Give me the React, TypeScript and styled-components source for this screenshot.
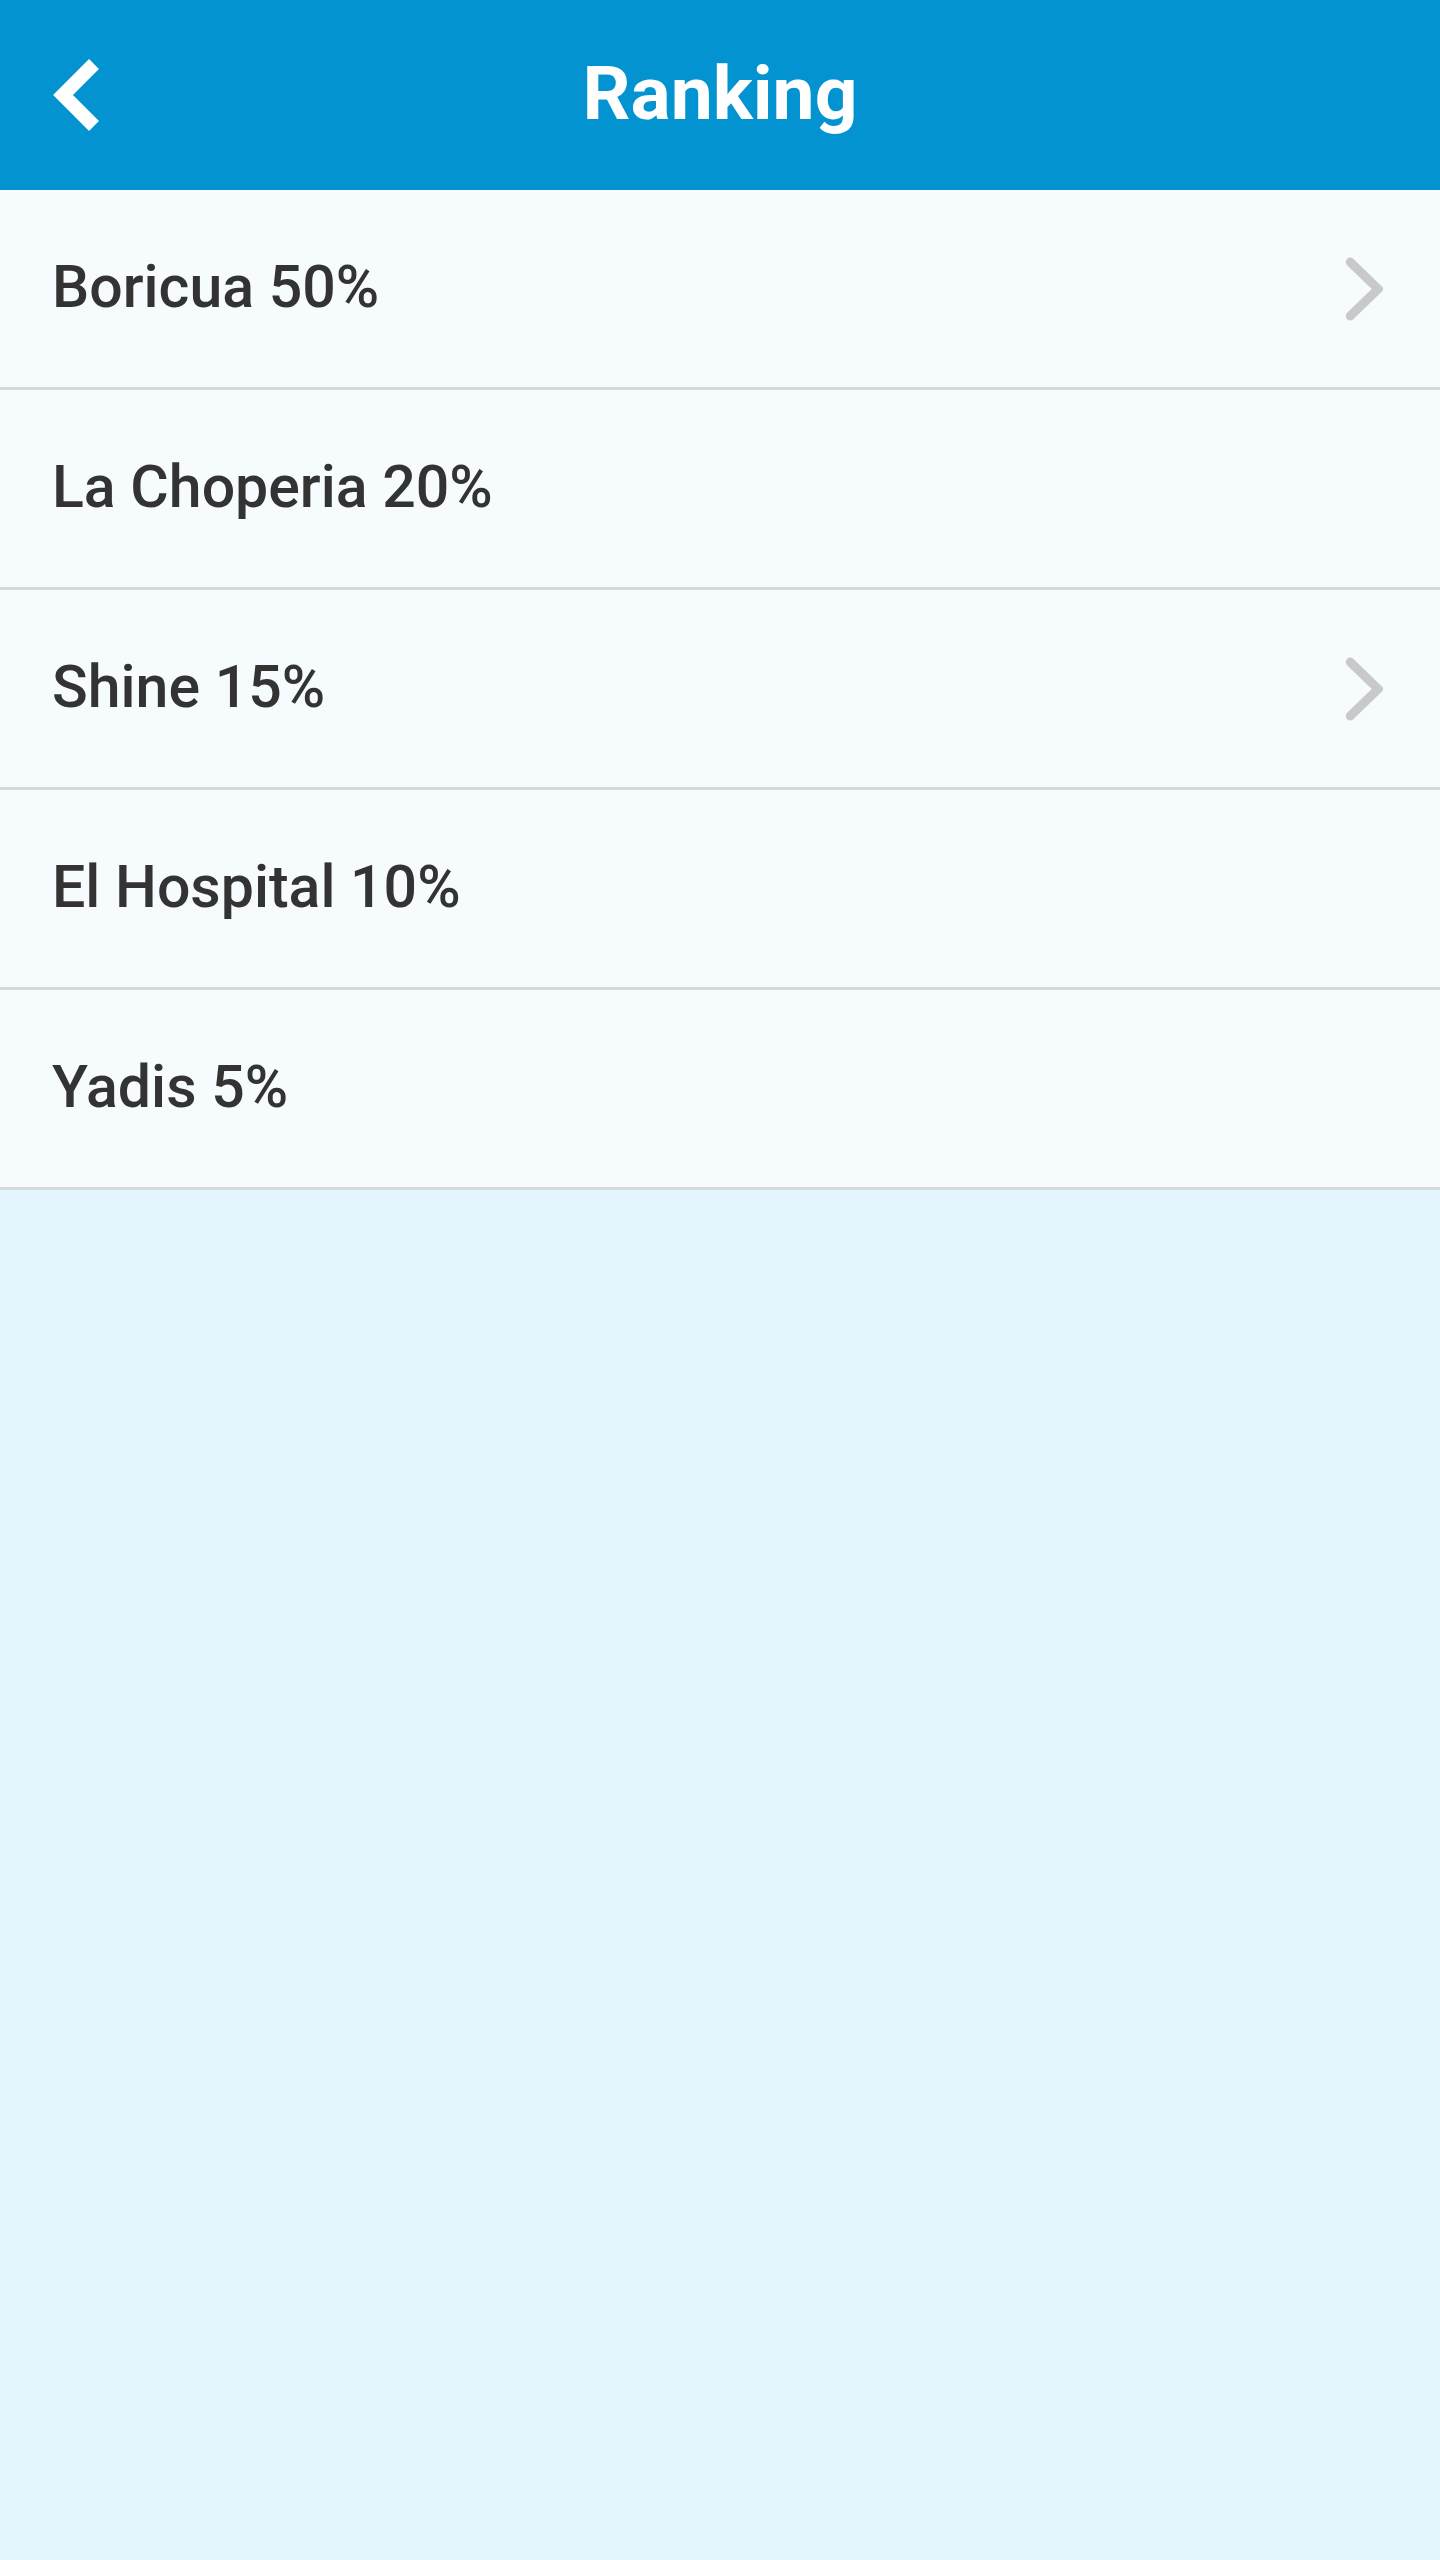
import React from "react";
import styled, { createGlobalStyle } from "styled-components";

const GlobalStyle = createGlobalStyle`
  html, body {
    margin: 0;
    padding: 0;
    background: #e3f5fd;
  }
  body {
    font-family: Roboto, "Noto Sans", "Liberation Sans", sans-serif;
  }
`;

const Screen = styled.div`
  min-height: 100vh;
  display: flex;
  flex-direction: column;
  background: #e3f5fd;
`;

const Header = styled.header`
  height: 190px;
  background: #0393d0;
  display: grid;
  grid-template-columns: 190px 1fr 190px;
  align-items: center;
`;

const BackButton = styled.button`
  background: none;
  border: 0;
  padding: 0 0 0 50px;
  height: 100%;
  display: flex;
  align-items: center;
  cursor: pointer;
`;

const Title = styled.h1`
  margin: 0;
  text-align: center;
  color: #ffffff;
  font-family: Roboto, "Noto Sans", sans-serif;
  font-weight: 700;
  font-size: 75px;
  line-height: 1;
  padding-bottom: 4px;
`;

const List = styled.ul`
  list-style: none;
  margin: 0;
  padding: 0;
`;

const Row = styled.li`
  height: 197px;
  box-sizing: content-box;
  border-bottom: 3px solid #d5d9da;
  background: #f6fbfe;
  display: flex;
  align-items: center;
  justify-content: space-between;
  padding: 0 57px 0 52px;
`;

const Label = styled.span`
  font-family: Roboto, "Noto Sans", sans-serif;
  font-size: 59px;
  font-weight: 500;
  color: #333333;
  padding-bottom: 4px;
`;

const Chevron = ({ color, size }: { color: string; size: number }) => (
  <svg width={size * 0.6} height={size} viewBox="0 0 38 64" fill="none">
    <path
      d="M5 5 L33 32 L5 59"
      stroke={color}
      strokeWidth={9}
      strokeLinecap="round"
      strokeLinejoin="miter"
    />
  </svg>
);

const BackChevron = () => (
  <svg width="60" height="92" viewBox="0 0 60 92" fill="none">
    <path
      d="M44 15 L13 46 L44 77"
      stroke="#ffffff"
      strokeWidth={14}
      strokeLinecap="butt"
      strokeLinejoin="miter"
    />
  </svg>
);

const items = [
  { name: "Boricua 50%", more: true },
  { name: "La Choperia 20%", more: false },
  { name: "Shine 15%", more: true },
  { name: "El Hospital 10%", more: false },
  { name: "Yadis 5%", more: false },
];

export default function App() {
  return (
    <Screen>
      <GlobalStyle />
      <Header>
        <BackButton aria-label="Back">
          <BackChevron />
        </BackButton>
        <Title>Ranking</Title>
        <div />
      </Header>
      <List>
        {items.map((it) => (
          <Row key={it.name}>
            <Label>{it.name}</Label>
            {it.more && <Chevron color="#c9c9cd" size={64} />}
          </Row>
        ))}
      </List>
    </Screen>
  );
}
